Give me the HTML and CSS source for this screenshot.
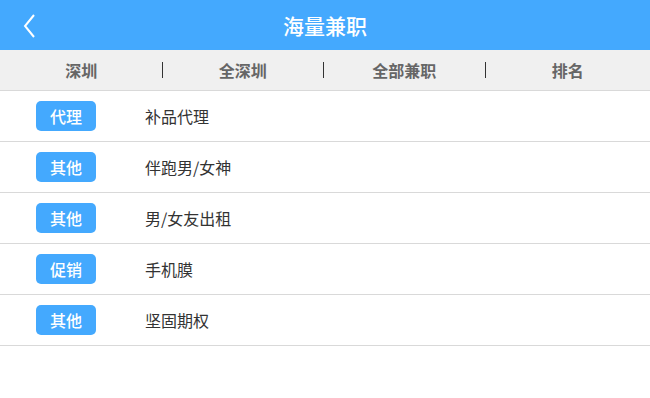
FILE: index.html
```html
<!DOCTYPE html>
<html lang="zh">
<head>
<meta charset="utf-8">
<title>海量兼职</title>
<link rel="stylesheet" href="styles.css">
</head>
<body>
<header class="topbar">
  <span class="back">
    <svg width="12" height="24" viewBox="0 0 12 24"><polyline points="11,1 2,12 11,23" fill="none" stroke="#fff" stroke-width="2"/></svg>
  </span>
  <h1 class="title">海量兼职</h1>
</header>
<nav class="tabs">
  <div class="tab">深圳</div>
  <div class="tab">全深圳</div>
  <div class="tab">全部兼职</div>
  <div class="tab">排名</div>
</nav>
<ul class="list">
  <li class="row"><span class="badge">代理</span><span class="name">补品代理</span></li>
  <li class="row"><span class="badge">其他</span><span class="name">伴跑男/女神</span></li>
  <li class="row"><span class="badge">其他</span><span class="name">男/女友出租</span></li>
  <li class="row"><span class="badge">促销</span><span class="name">手机膜</span></li>
  <li class="row"><span class="badge">其他</span><span class="name">坚固期权</span></li>
</ul>
</body>
</html>
```
FILE: styles.css
```css
* { box-sizing: border-box; }
body {
  margin: 0;
  font-family: "Noto Sans CJK SC", "Noto Sans", sans-serif;
  background: #fff;
  width: 650px;
}
.topbar {
  height: 50px;
  background: #44a9fe;
  display: flex;
  align-items: center;
  justify-content: center;
  position: relative;
}
.back {
  position: absolute;
  left: 23px;
  top: 14px;
  width: 12px;
  height: 24px;
  display: block;
}
.back svg { display: block; }
.title {
  margin: 0;
  color: #fff;
  font-size: 21px;
  font-weight: 500;
  line-height: 50px;
}
.tabs {
  height: 41px;
  background: #f0f0f0;
  border-bottom: 1px solid #d9d9d9;
  display: flex;
  align-items: center;
  padding-left: 1px;
}
.tab {
  flex: 0 0 161.5px;
  text-align: center;
  font-size: 16px;
  font-weight: bold;
  color: #666;
  line-height: 16px;
  border-right: 1px solid #333;
}
.tab:last-child { border-right: none; flex: 1; }
.list {
  list-style: none;
  margin: 0;
  padding: 0;
}
.row {
  height: 51px;
  border-bottom: 1px solid #d9d9d9;
  display: flex;
  align-items: center;
  padding-left: 36px;
}
.badge {
  width: 60px;
  height: 30px;
  background: #44a9fe;
  color: #fff;
  border-radius: 5px;
  font-size: 16px;
  font-weight: 500;
  display: flex;
  align-items: center;
  justify-content: center;
}
.name {
  margin-left: 49px;
  font-size: 16px;
  color: #333;
}
```
